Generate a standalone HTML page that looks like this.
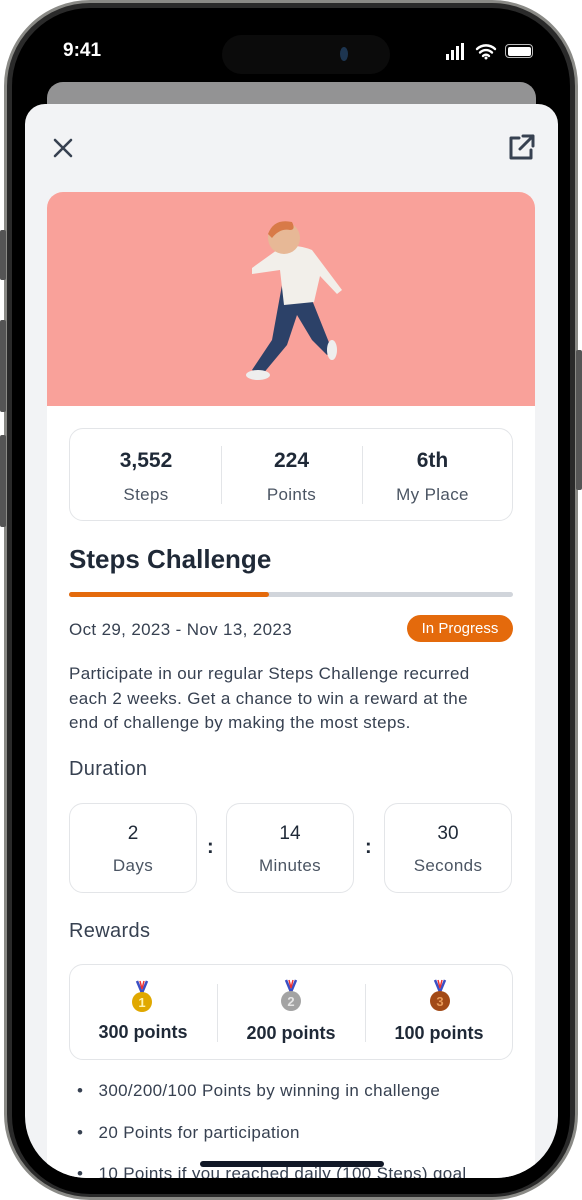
<!DOCTYPE html>
<html><head><meta charset="utf-8"><style>
*{margin:0;padding:0;box-sizing:border-box}
body{width:582px;height:1200px;background:#fff;position:relative;overflow:hidden;font-family:"Liberation Sans",sans-serif;color:#1f2937}
.abs{position:absolute}
.phone{left:4px;top:0;width:574px;height:1200px;border-radius:86px;background:#2a2a2a;border:3px solid #8a8a86}
.bez{left:12px;top:8px;width:558px;height:1186px;border-radius:78px;background:#000}
.screen{left:25px;top:22px;width:533px;height:1156px;border-radius:62px;background:#000;overflow:hidden}
.c{text-align:center}
.box{background:#fff;border:1px solid #e3e5e8;border-radius:14px}
.wide{letter-spacing:0.35px}
</style></head><body>
<div class="abs phone"></div>
<div class="abs" style="left:0;top:230px;width:6px;height:50px;background:#555;border-radius:2px"></div>
<div class="abs" style="left:0;top:320px;width:6px;height:92px;background:#555;border-radius:2px"></div>
<div class="abs" style="left:0;top:435px;width:6px;height:92px;background:#555;border-radius:2px"></div>
<div class="abs" style="right:0;top:350px;width:6px;height:140px;background:#555;border-radius:2px"></div>
<div class="abs bez"></div>
<div class="abs screen">
 <div class="abs" style="left:197px;top:13px;width:168px;height:39px;background:#0b0b0b;border-radius:20px"></div>
 <div class="abs" style="left:315px;top:25px;width:8px;height:14px;border-radius:50%;background:#1d3550"></div>
 <div class="abs" style="left:38px;top:18px;color:#fff;font-size:19px;font-weight:600">9:41</div>
 <div class="abs" style="left:421px;top:32px;width:3px;height:6px;background:#fff"></div>
 <div class="abs" style="left:426px;top:28px;width:3px;height:10px;background:#fff"></div>
 <div class="abs" style="left:431px;top:24px;width:3px;height:14px;background:#fff"></div>
 <div class="abs" style="left:436px;top:21px;width:3px;height:17px;background:#fff"></div>
 <svg class="abs" style="left:450px;top:20px" width="22" height="18" viewBox="0 0 22 18"><path d="M2 7a13 13 0 0 1 18 0M5 10.5a8.5 8.5 0 0 1 12 0M8 14a4 4 0 0 1 6 0" stroke="#fff" stroke-width="2.4" fill="none" stroke-linecap="round"/><circle cx="11" cy="16" r="1.5" fill="#fff"/></svg>
 <div class="abs" style="left:480px;top:22px;width:28px;height:14px;border:1.5px solid #bbb;border-radius:4px;padding:1.5px"><div style="width:100%;height:100%;background:#fff;border-radius:2px"></div></div>
 <div class="abs" style="left:22px;top:60px;width:489px;height:60px;background:#939394;border-radius:16px"></div>
 <div class="abs" style="left:0;top:82px;width:533px;height:1080px;background:#f2f3f5;border-radius:20px 20px 0 0;overflow:hidden">
  <svg class="abs" style="left:26px;top:32px" width="24" height="24" viewBox="0 0 24 24"><path d="M4 4L20 20M20 4L4 20" stroke="#374151" stroke-width="2.6" stroke-linecap="round"/></svg>
  <svg class="abs" style="left:480px;top:28px" width="32" height="32" viewBox="0 0 32 32"><path d="M14 6H6v20h20v-8M18 4h10v10M28 4L15 17" stroke="#374151" stroke-width="3" fill="none" stroke-linecap="round" stroke-linejoin="round"/></svg>
  <div class="abs" style="left:22px;top:88px;width:488px;height:1000px;background:#fff;border-radius:16px;overflow:hidden">
   <div class="abs" style="left:0;top:0;width:488px;height:214px;background:#f9a19a">
    <svg class="abs" style="left:185px;top:18px" width="120" height="178" viewBox="0 0 120 178">
     <path d="M50 75 L40 130 L20 160 L30 165 L55 135 L65 105 L80 130 L95 145 L100 140 L90 115 L78 85Z" fill="#2c4168"/>
     <path d="M45 40 Q60 32 80 40 L95 60 L110 80 L105 84 L88 66 L82 92 L52 95 L48 60 L20 64 L20 58Z" fill="#f2efea"/>
     <circle cx="52" cy="28" r="16" fill="#e7b896"/>
     <path d="M36 24 Q42 8 60 12 Q64 20 58 20 Q48 18 40 28Z" fill="#d87a48"/>
     <ellipse cx="26" cy="165" rx="12" ry="5" fill="#eee"/><ellipse cx="100" cy="140" rx="5" ry="10" fill="#eee"/>
    </svg>
   </div>
   <div class="abs box" style="left:22px;top:236px;width:444px;height:93px">
    <div class="abs c" style="left:0;top:20px;width:152px;font-size:21px;font-weight:700">3,552</div>
    <div class="abs c wide" style="left:0;top:56px;width:152px;font-size:17px;color:#4b5563">Steps</div>
    <div class="abs" style="left:151px;top:17px;width:1px;height:58px;background:#e3e5e8"></div>
    <div class="abs c" style="left:151px;top:20px;width:141px;font-size:21px;font-weight:700">224</div>
    <div class="abs c wide" style="left:151px;top:56px;width:141px;font-size:17px;color:#4b5563">Points</div>
    <div class="abs" style="left:292px;top:17px;width:1px;height:58px;background:#e3e5e8"></div>
    <div class="abs c" style="left:292px;top:20px;width:141px;font-size:21px;font-weight:700">6th</div>
    <div class="abs c wide" style="left:292px;top:56px;width:141px;font-size:17px;color:#4b5563">My Place</div>
   </div>
   <div class="abs" style="left:22px;top:352px;font-size:26px;font-weight:700;color:#1f2937">Steps Challenge</div>
   <div class="abs" style="left:22px;top:400px;width:444px;height:5px;background:#d1d5db;border-radius:3px"><div style="width:200px;height:5px;background:#e46a0c;border-radius:3px"></div></div>
   <div class="abs wide" style="left:22px;top:428px;font-size:17px;color:#374151">Oct 29, 2023 - Nov 13, 2023</div>
   <div class="abs c" style="left:360px;top:423px;width:106px;height:27px;background:#e46a0c;border-radius:14px;color:#fff;font-size:15px;line-height:27px">In Progress</div>
   <div class="abs wide" style="left:22px;top:470px;width:470px;font-size:17px;line-height:24.5px;color:#374151;white-space:nowrap">Participate in our regular Steps Challenge recurred<br>each 2 weeks. Get a chance to win a reward at the<br>end of challenge by making the most steps.</div>
   <div class="abs wide" style="left:22px;top:566px;font-size:20px;color:#374151">Duration</div>
   <div class="abs box c" style="left:22px;top:611px;width:128px;height:90px"><div style="margin-top:19px;font-size:19px">2</div><div class="wide" style="margin-top:11px;font-size:17px;color:#4b5563">Days</div></div>
   <div class="abs" style="left:160px;top:644px;font-size:20px;font-weight:700">:</div>
   <div class="abs box c" style="left:179px;top:611px;width:128px;height:90px"><div style="margin-top:19px;font-size:19px">14</div><div class="wide" style="margin-top:11px;font-size:17px;color:#4b5563">Minutes</div></div>
   <div class="abs" style="left:318px;top:644px;font-size:20px;font-weight:700">:</div>
   <div class="abs box c" style="left:337px;top:611px;width:128px;height:90px"><div style="margin-top:19px;font-size:19px">30</div><div class="wide" style="margin-top:11px;font-size:17px;color:#4b5563">Seconds</div></div>
   <div class="abs wide" style="left:22px;top:728px;font-size:20px;color:#374151">Rewards</div>
   <div class="abs box" style="left:22px;top:772px;width:444px;height:96px">
    <div class="abs" style="left:147px;top:19px;width:1px;height:58px;background:#e3e5e8"></div>
    <div class="abs" style="left:295px;top:19px;width:1px;height:58px;background:#e3e5e8"></div>
   </div>
   <svg class="abs" style="left:84px;top:787px" width="22" height="36" viewBox="0 0 22 36"><path d="M6 2l5 12 5-12" stroke="#3b4fc4" stroke-width="2.5" fill="none"/><path d="M9 2l2 8 2-8" stroke="#e33" stroke-width="1.5" fill="none"/><circle cx="11" cy="23" r="10" fill="#e0a800"/><text x="11" y="28" font-size="13" font-weight="700" fill="#fff3b0" text-anchor="middle" font-family="Liberation Sans">1</text></svg>
   <svg class="abs" style="left:233px;top:786px" width="22" height="36" viewBox="0 0 22 36"><path d="M6 2l5 12 5-12" stroke="#3b4fc4" stroke-width="2.5" fill="none"/><path d="M9 2l2 8 2-8" stroke="#e33" stroke-width="1.5" fill="none"/><circle cx="11" cy="23" r="10" fill="#a3a3a3"/><text x="11" y="28" font-size="13" font-weight="700" fill="#e5e5e5" text-anchor="middle" font-family="Liberation Sans">2</text></svg>
   <svg class="abs" style="left:382px;top:786px" width="22" height="36" viewBox="0 0 22 36"><path d="M6 2l5 12 5-12" stroke="#3b4fc4" stroke-width="2.5" fill="none"/><path d="M9 2l2 8 2-8" stroke="#e33" stroke-width="1.5" fill="none"/><circle cx="11" cy="23" r="10" fill="#a24a17"/><text x="11" y="28" font-size="13" font-weight="700" fill="#e79a5a" text-anchor="middle" font-family="Liberation Sans">3</text></svg>
   <div class="abs c" style="left:22px;top:830px;width:148px;font-size:18px;font-weight:600">300 points</div>
   <div class="abs c" style="left:170px;top:831px;width:148px;font-size:18px;font-weight:600">200 points</div>
   <div class="abs c" style="left:318px;top:831px;width:148px;font-size:18px;font-weight:600">100 points</div>
   <div class="abs wide" style="left:30px;top:878px;font-size:17px;color:#374151;line-height:41.5px;white-space:nowrap">
    <div>•&nbsp;&nbsp; 300/200/100 Points by winning in challenge</div>
    <div>•&nbsp;&nbsp; 20 Points for participation</div>
    <div>•&nbsp;&nbsp; 10 Points if you reached daily (100 Steps) goal</div>
   </div>
  </div>
 </div>
 <div class="abs" style="left:175px;top:1139px;width:184px;height:6px;background:#111827;border-radius:3px"></div>
</div>
</body></html>
